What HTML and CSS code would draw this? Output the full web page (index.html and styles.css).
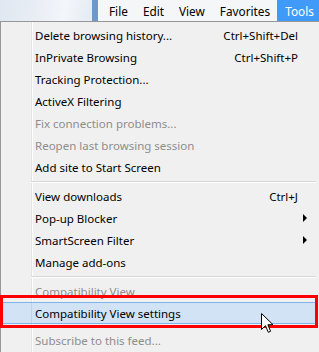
FILE: index.html
```html
<!DOCTYPE html>
<html>
<head>
<meta charset="utf-8">
<link rel="stylesheet" href="styles.css">
</head>
<body>
<div class="screen">
  <div class="top">
    <div class="backdrop"></div>
    <div class="strip"></div>
    <div class="menubar">
      <span class="mb-item">File</span>
      <span class="mb-item">Edit</span>
      <span class="mb-item">View</span>
      <span class="mb-item">Favorites</span>
      <span class="mb-item active">Tools</span>
    </div>
  </div>
  <div class="menu">
    <div class="item"><span class="label">Delete browsing history...</span><span class="key">Ctrl+Shift+Del</span><span class="arrow-col"></span></div>
    <div class="item"><span class="label">InPrivate Browsing</span><span class="key">Ctrl+Shift+P</span><span class="arrow-col"></span></div>
    <div class="item"><span class="label">Tracking Protection...</span><span class="key"></span><span class="arrow-col"></span></div>
    <div class="item"><span class="label">ActiveX Filtering</span><span class="key"></span><span class="arrow-col"></span></div>
    <div class="item disabled"><span class="label">Fix connection problems...</span><span class="key"></span><span class="arrow-col"></span></div>
    <div class="item disabled"><span class="label">Reopen last browsing session</span><span class="key"></span><span class="arrow-col"></span></div>
    <div class="item"><span class="label">Add site to Start Screen</span><span class="key"></span><span class="arrow-col"></span></div>
    <div class="sep"></div>
    <div class="item"><span class="label">View downloads</span><span class="key">Ctrl+J</span><span class="arrow-col"></span></div>
    <div class="item"><span class="label">Pop-up Blocker</span><span class="key"></span><span class="arrow-col"><span class="tri"></span></span></div>
    <div class="item"><span class="label">SmartScreen Filter</span><span class="key"></span><span class="arrow-col"><span class="tri"></span></span></div>
    <div class="item"><span class="label">Manage add-ons</span><span class="key"></span><span class="arrow-col"></span></div>
    <div class="sep"></div>
    <div class="item disabled"><span class="label">Compatibility View</span><span class="key"></span><span class="arrow-col"></span></div>
    <div class="item hover"><span class="label">Compatibility View settings</span><span class="key"></span><span class="arrow-col"></span></div>
    <div class="item disabled last"><span class="label">Subscribe to this feed...</span><span class="key"></span><span class="arrow-col"></span></div>
    <div class="callout"></div>
    <svg class="cursor" width="13" height="21" viewBox="0 0 13 21">
      <path d="M0.5 0.5 L0.5 16.5 L4.5 12.7 L7.3 19.3 L9.6 18.3 L6.9 11.7 L12 11.7 Z" fill="#fff" stroke="#000" stroke-width="1" stroke-linejoin="miter"/>
    </svg>
  </div>
</div>
</body>
</html>
```
FILE: styles.css
```css
html, body {
  margin: 0;
  padding: 0;
}
body {
  width: 319px;
  height: 352px;
  overflow: hidden;
  background: #f0f0f0;
  font-family: "Noto Sans", "Open Sans", sans-serif;
  font-size: 11.5px;
}
.screen {
  width: 319px;
  height: 352px;
  display: flex;
  flex-direction: column;
}
.top {
  height: 21px;
  display: flex;
  flex: none;
}
.backdrop {
  flex: none;
  width: 92px;
  background: linear-gradient(100deg, #dfe7f0 0%, #e9eef5 40%, #f3f6fa 70%, #e4ebf3 100%);
}
.strip {
  flex: none;
  width: 6px;
  background: #6d98c9;
}
.menubar {
  flex: 1;
  min-width: 0;
  overflow: hidden;
  background: #f5f6f7;
  display: flex;
  align-items: stretch;
  padding-left: 3px;
  color: #000;
  font-size: 11.8px;
}
.mb-item {
  display: flex;
  align-items: center;
  padding: 0 7px 0 8px;
  flex: none;
}
.mb-item.active {
  background: #3f9bf7;
  color: #fff;
  flex: 1;
}
.menu {
  position: relative;
  flex: 1;
  border-top: 1px solid #979797;
  border-left: 1px solid #979797;
  padding: 2px 3px 0 2px;
  background:
    linear-gradient(to right, transparent 30px, #e2e3e3 30px, #e2e3e3 31px, #ffffff 31px, #ffffff 32px, transparent 32px),
    #f0f0f0;
}
.item {
  height: 22px;
  display: grid;
  grid-template-columns: 1fr auto 18px;
  align-items: center;
  padding-left: 32px;
  box-sizing: border-box;
  color: #000;
  white-space: nowrap;
}
.item.disabled {
  color: #8d8d8d;
}
.item.hover {
  background:
    linear-gradient(to right, transparent 28px, #c3d3e3 28px, #c3d3e3 29px, transparent 29px),
    #d1e3f5;
  border-top: 1px solid #7fb2e6;
  border-bottom: 1px solid #7fb2e6;
}
.item.last {
  margin-top: 5px;
}
.key {
  text-align: right;
}
.arrow-col {
  display: flex;
  align-items: center;
  padding-left: 5px;
}
.tri {
  width: 0;
  height: 0;
  border-top: 4px solid transparent;
  border-bottom: 4px solid transparent;
  border-left: 4px solid #000;
}
.sep {
  height: 7px;
  margin-left: 28px;
  background: linear-gradient(to bottom, transparent 3px, #d7d7d7 3px, #d7d7d7 4px, #ffffff 4px, #ffffff 5px, transparent 5px);
}
.callout {
  position: absolute;
  left: -1px;
  top: 273px;
  width: 312px;
  height: 27px;
  border: 3px solid #ff0000;
}
.cursor {
  position: absolute;
  left: 260px;
  top: 291px;
}
```
